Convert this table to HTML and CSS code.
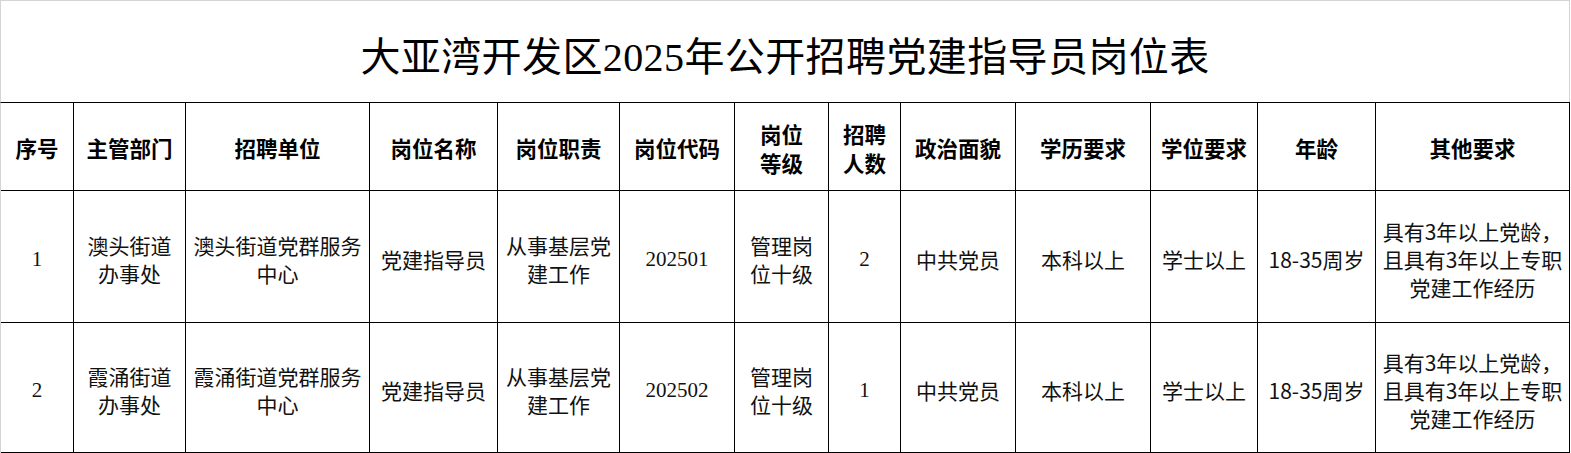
FILE: index.html
```html
<!DOCTYPE html>
<html lang="zh-CN">
<head>
<meta charset="utf-8">
<title>大亚湾开发区2025年公开招聘党建指导员岗位表</title>
<link rel="stylesheet" href="styles.css">
</head>
<body>
<div class="sheet">
  <div class="title">大亚湾开发区2025年公开招聘党建指导员岗位表</div>
  <div class="grid">
    <div class="cell head">序号</div>
    <div class="cell head">主管部门</div>
    <div class="cell head">招聘单位</div>
    <div class="cell head">岗位名称</div>
    <div class="cell head">岗位职责</div>
    <div class="cell head">岗位代码</div>
    <div class="cell head">岗位<br>等级</div>
    <div class="cell head">招聘<br>人数</div>
    <div class="cell head">政治面貌</div>
    <div class="cell head">学历要求</div>
    <div class="cell head">学位要求</div>
    <div class="cell head">年龄</div>
    <div class="cell head">其他要求</div>

    <div class="cell num">1</div>
    <div class="cell">澳头街道<br>办事处</div>
    <div class="cell">澳头街道党群服务<br>中心</div>
    <div class="cell">党建指导员</div>
    <div class="cell">从事基层党<br>建工作</div>
    <div class="cell num">202501</div>
    <div class="cell">管理岗<br>位十级</div>
    <div class="cell num">2</div>
    <div class="cell">中共党员</div>
    <div class="cell">本科以上</div>
    <div class="cell">学士以上</div>
    <div class="cell">18-35周岁</div>
    <div class="cell">具有3年以上党龄，<br>且具有3年以上专职<br>党建工作经历</div>

    <div class="cell num">2</div>
    <div class="cell">霞涌街道<br>办事处</div>
    <div class="cell">霞涌街道党群服务<br>中心</div>
    <div class="cell">党建指导员</div>
    <div class="cell">从事基层党<br>建工作</div>
    <div class="cell num">202502</div>
    <div class="cell">管理岗<br>位十级</div>
    <div class="cell num">1</div>
    <div class="cell">中共党员</div>
    <div class="cell">本科以上</div>
    <div class="cell">学士以上</div>
    <div class="cell">18-35周岁</div>
    <div class="cell">具有3年以上党龄，<br>且具有3年以上专职<br>党建工作经历</div>
  </div>
</div>
</body>
</html>
```
FILE: styles.css
```css
* {
  box-sizing: border-box;
}

html, body {
  margin: 0;
  padding: 0;
  background: #ffffff;
}

body {
  width: 1571px;
  height: 453px;
  overflow: hidden;
  font-family: "Noto Sans CJK SC", "Noto Sans", sans-serif;
  color: #111111;
}

.sheet {
  width: 1570px;
}

.title {
  height: 102px;
  border-top: 1px solid #d4d4d4;
  border-left: 1px solid #d4d4d4;
  border-right: 1px solid #d4d4d4;
  display: flex;
  align-items: center;
  justify-content: center;
  padding-top: 4px;
  font-family: "Liberation Serif", "Noto Sans CJK SC", serif;
  font-size: 40px;
  color: #000000;
  letter-spacing: 0.4px;
}

.grid {
  display: grid;
  grid-template-columns: 73px 112px 184px 128px 122px 115px 94px 72px 115px 135px 107px 118px 194px;
  grid-template-rows: 88px 132px 130px;
  border-top: 1px solid #000000;
  border-left: 1px solid #d4d4d4;
}

.cell {
  border-right: 1px solid #000000;
  border-bottom: 1px solid #000000;
  display: flex;
  align-items: center;
  justify-content: center;
  text-align: center;
  font-size: 21px;
  line-height: 28px;
  padding: 5px 2px 0;
  white-space: nowrap;
}

.head {
  font-weight: 700;
  font-size: 21.5px;
  line-height: 29px;
  color: #000000;
  padding-top: 2px;
}

.num {
  font-family: "Liberation Serif", "Noto Sans CJK SC", serif;
  font-size: 21px;
}
```
